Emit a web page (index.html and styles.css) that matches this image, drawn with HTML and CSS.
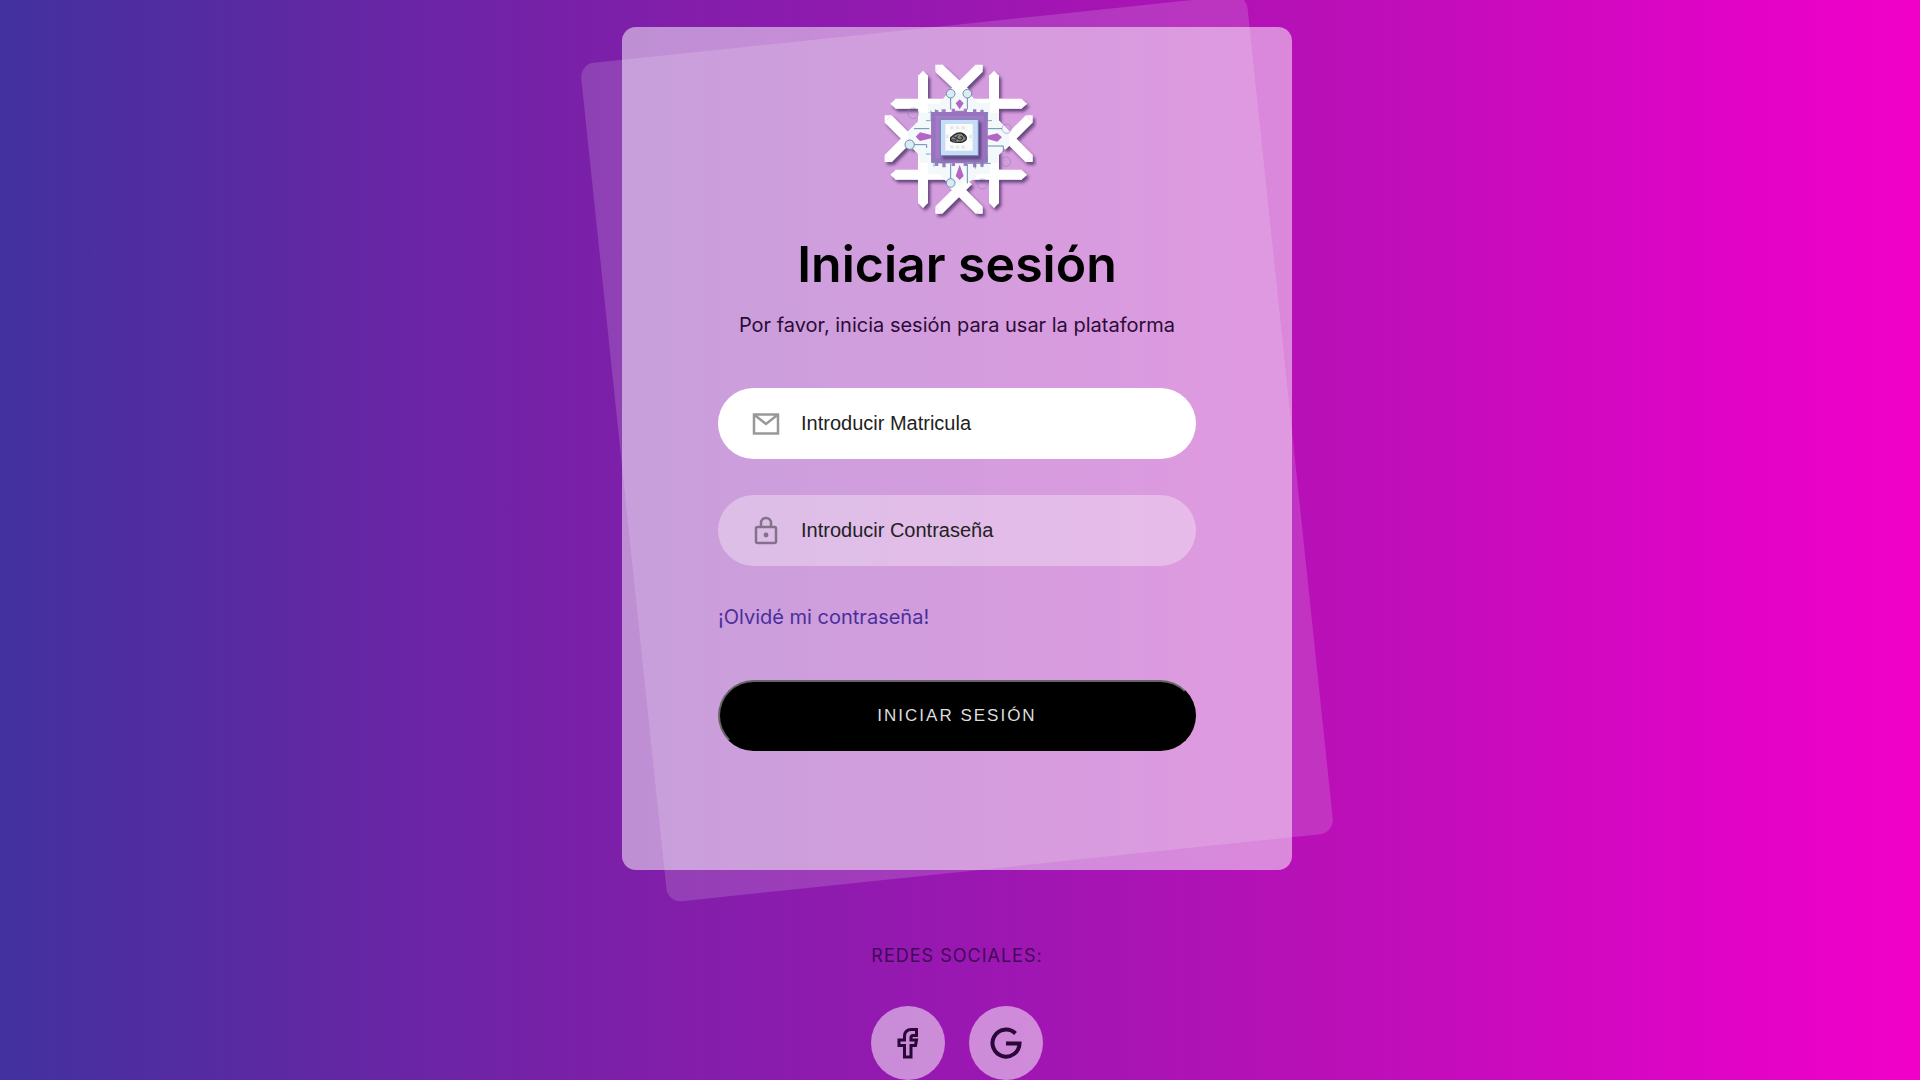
FILE: index.html
```html
<!DOCTYPE html>
<html lang="es">
<head>
<meta charset="utf-8">
<meta name="viewport" content="width=device-width, initial-scale=1">
<title>Iniciar sesión</title>
<link rel="stylesheet" href="styles.css">
</head>
<body>
<main class="page">
  <section class="card">
    <svg class="logo" viewBox="51 30 480 480" aria-hidden="true">
      <defs>
        <filter id="shade" x="-10%" y="-10%" width="125%" height="125%">
          <feDropShadow dx="7" dy="9" stdDeviation="4" flood-color="#3d2058" flood-opacity=".7"/>
        </filter>
        <g id="traces">
          <circle cx="272" cy="131" r="13"/>
          <path d="M272 144v34M322 144v34"/>
          <circle cx="322" cy="131" r="13"/>
        </g>
      </defs>
      <g filter="url(#shade)">
        <g stroke="#fff" stroke-width="30" fill="none">
          <path d="M236 54L316 129M358 54L268 143"/>
          <path d="M236 481L325 392M358 481L278 401"/>
          <path d="M84 206L166 288M84 326L166 244"/>
          <path d="M508 206L426 288M508 326L426 244"/>
          <path d="M189 76V222M106 161H258M402 76V222M486 161H336"/>
          <path d="M189 460V300M106 374H258M402 460V300M486 374H336"/>
        </g>
        <g fill="#fff">
          <path d="M174 78l15-16 15 16zM387 78l15-16 15 16zM174 458l15 16 15-16zM387 458l15 16 15-16z"/>
          <path d="M108 146l-17 15 17 15zM484 146l17 15-17 15zM108 359l-17 15 17 15zM484 359l17 15-17 15z"/>
          <path d="M226 64V44h20zM368 64V44h-20zM226 471v20h20zM368 471v20h-20z"/>
          <path d="M94 196H74v20zM498 196h20v20zM94 336H74v-20zM498 336h20v-20z"/>
        </g>
      </g>
      <g fill="#f3f8fb">
        <path d="M204 188v-26h32l22-26h30l9-12 9 12h26l24 22h34v30z"/>
        <path d="M204 336v36h32l22 22h30l10 16 10-16h24l22-22h36v-36z"/>
        <path d="M214 188h-36v22l-34 34v38l34 34v22h36z"/>
        <path d="M382 188h34v22l32 34v38l-32 34v22h-34z"/>
      </g>
      <path d="M213 186h12v-6h10v6h12v-8h10v8h18v-10h10v6h26v-6h10v10h18v-8h10v8h12v-6h10v6h12v152h-12v12h-10v-12h-12v14h-10v-14h-18v10h-10v-8h-26v8h-10v-8h-18v12h-10v-12h-12v8h-10v-10h-12z" fill="#a678c6"/>
      <path d="M221 192h156v140H221z" fill="none" stroke="#8a72b8" stroke-width="12" opacity=".55"/>
      <g fill="none" stroke="#6a8caf" stroke-width="3">
        <g fill="#dceaf2"><use href="#traces"/><circle cx="272" cy="399" r="13"/><circle cx="149" cy="284" r="14"/></g>
        <path d="M163 284h37v10M162 236h46M384 236h42M384 288h46v18M272 386v-46M322 400v-60h70M226 338h44"/>
        <g opacity=".55"><circle cx="440" cy="236" r="14"/><circle cx="438" cy="335" r="14"/><circle cx="367" cy="402" r="15"/><circle cx="160" cy="190" r="16"/></g>
        <path d="M213 182v30M226 178v10M246 178v10M346 178v10M366 178v10M382 186v26M198 212h14M382 212h14M198 312h14M222 320v30M246 340v-12M346 342v14M366 342v10M382 316v20" opacity=".8"/>
      </g>
      <g fill="#b466c4">
        <path d="M299 148l12 12-12 18-12-18zM299 344l12 34-12 12-12-12zM180 247l34 8v10l-34 8-13-13zM412 250l14 12-14 13-30-8v-10z"/>
      </g>
      <path d="M241 208h114v109H241z" fill="#c8dcf5" stroke="#6584ba" stroke-width="3" filter="url(#shade)"/>
      <path d="M256 222h82v80h-82z" fill="#fbfdfd"/>
      <path d="M270 233h52M270 291h52M262 254v18M332 254v18" stroke="#e6e9ec" stroke-width="9" stroke-dasharray="11 6"/>
      <path d="M272 263l10-8q15-11 30-2 10 8 6 16-10 10-28 8-12 0-18-5z" fill="#858585" stroke="#292929" stroke-width="4"/>
      <path d="M280 260l10 5-4 8M294 256q-8 5-1 11t14 0q3-9-6-7M307 252l8 10M272 270h14" fill="none" stroke="#292929" stroke-width="3"/>
    </svg>
    <h1 class="title">Iniciar sesión</h1>
    <p class="subtitle">Por favor, inicia sesión para usar la plataforma</p>
    <form class="form">
      <label class="field field-active">
        <svg class="field-icon" viewBox="0 0 32 32" aria-hidden="true"><path d="M4 6.500h24v19H4zM4 6.500l12 9.500 12-9.500"/></svg>
        <input class="field-input" type="text" placeholder="Introducir Matricula" aria-label="Matricula">
      </label>
      <label class="field">
        <svg class="field-icon" viewBox="0 0 32 32" aria-hidden="true"><rect x="6" y="12" width="20" height="16" rx="1.500"/><path d="M11 12V8a5 5 0 0 1 10 0v4"/><circle cx="16" cy="20" r="1.200"/></svg>
        <input class="field-input" type="password" placeholder="Introducir Contraseña" aria-label="Contraseña">
      </label>
      <a class="forgot" href="#">¡Olvidé mi contraseña!</a>
      <button class="submit" type="submit">INICIAR SESIÓN</button>
    </form>
  </section>
  <footer class="social">
    <p class="social-title">REDES SOCIALES:</p>
    <div class="social-links">
      <a class="social-link" href="#" aria-label="Facebook">
        <svg class="social-icon" viewBox="0 0 36 36" aria-hidden="true"><path d="M26.500 4.500v6h-3.500q-2 0-2 2v2.500h5.500l-1 5.500H21V32h-6.500V20.500H9V15h5.500v-3.500q0-7 7-7z" stroke-width="3"/></svg>
      </a>
      <a class="social-link" href="#" aria-label="Google">
        <svg class="social-icon" viewBox="0 0 36 36" aria-hidden="true"><path d="M27.500 8.500A13.500 13.500 0 1 0 31.500 18.500H18" stroke-width="4"/></svg>
      </a>
    </div>
  </footer>
</main>
</body>
</html>
```
FILE: styles.css
```css
* {
  box-sizing: border-box;
}

body {
  margin: 0;
  min-height: 100vh;
  font-family: "Inter", "Liberation Sans", sans-serif;
  font-size: 20px;
  color: #000;
  background: linear-gradient(to right, #42319f 0%, #7b20a8 31%, #9818b1 49%, #bb0fb8 70%, #e004c6 90%, #f200c8 100%);
}

.page {
  display: flex;
  flex-direction: column;
  align-items: center;
  padding: 27px 6px 0 0;
  overflow: hidden;
}

.card {
  position: relative;
  display: flex;
  flex-direction: column;
  align-items: center;
  width: 100%;
  max-width: 670px;
  padding: 33px 96px 119px;
  border-radius: 14px;
  background: rgba(255, 255, 255, 0.5);
}

/* tilted pane over the card */
.card::before {
  content: "";
  position: absolute;
  inset: 0;
  border-radius: 14px;
  background: rgba(255, 255, 255, 0.15);
  transform: rotate(-6deg);
  pointer-events: none;
}

.card > * {
  z-index: 1;
}

.logo {
  width: 160px;
  height: 160px;
}

.title {
  margin: 12px 0 0;
  font-size: 50px;
  line-height: 64px;
  font-weight: 600;
}

.subtitle {
  margin: 14px 0 0;
  line-height: 30px;
  color: #2b0b37;
}

.form {
  display: flex;
  flex-direction: column;
  width: 100%;
  margin-top: 48px;
}

.field {
  display: flex;
  align-items: center;
  gap: 19px;
  height: 71px;
  margin-bottom: 36px;
  padding: 0 34px 0 32px;
  border-radius: 36px;
  background: rgba(255, 255, 255, 0.33);
}

.field-active {
  background: #fff;
}

.field-icon {
  flex: none;
  width: 32px;
  height: 32px;
  fill: none;
  stroke: #000;
  stroke-width: 2.500;
  opacity: 0.4;
}

.field-input {
  flex: 1;
  min-width: 0;
  padding: 0;
  border: 0;
  outline: 0;
  background: none;
  font-family: "Liberation Sans", Arial, sans-serif;
  font-size: 20px;
}

.field-input::placeholder {
  color: #222;
  opacity: 1;
}

.forgot {
  align-self: flex-start;
  line-height: 30px;
  color: #4a2f9c;
  text-decoration: none;
}

.submit {
  height: 71px;
  margin-top: 48px;
  border: 2px outset #333;
  border-color: #666 #000 #000 #666;
  border-radius: 36px;
  background: #000;
  color: #ddd;
  font-family: "Liberation Sans", Arial, sans-serif;
  font-size: 17px;
  letter-spacing: 2px;
}

.social {
  display: flex;
  flex-direction: column;
  align-items: center;
  padding-top: 71px;
}

.social-title {
  margin: 0;
  font-size: 18px;
  line-height: 30px;
  letter-spacing: 1px;
  color: #43085a;
}

.social-links {
  display: flex;
  gap: 24px;
  margin-top: 35px;
}

.social-link {
  display: grid;
  place-items: center;
  width: 74px;
  height: 74px;
  border-radius: 50%;
  background: rgba(255, 255, 255, 0.5);
}

.social-icon {
  width: 36px;
  height: 36px;
  fill: none;
  stroke: #2b0638;
}
```
